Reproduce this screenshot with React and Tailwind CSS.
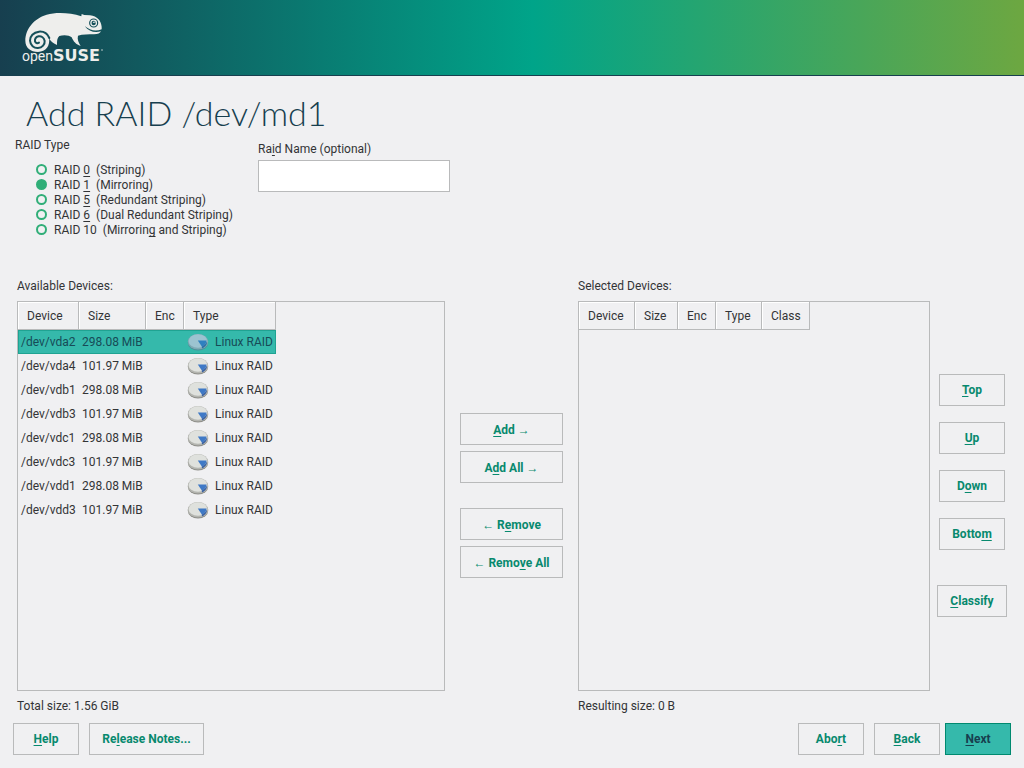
import { useState } from "react";

/* Renders a label in which the letter after "&" is underlined as its access key. */
function Mnemonic({ children }) {
  const at = children.indexOf("&");
  if (at < 0) return children;
  return (
    <>
      {children.slice(0, at)}
      <span className="underline decoration-1 underline-offset-2 [text-decoration-skip-ink:none]">
        {children[at + 1]}
      </span>
      {children.slice(at + 2)}
    </>
  );
}

function Button({ children, className = "", primary = false }) {
  const look = primary
    ? "border-[#00896f] bg-[#35b9ab] text-[#173f4f]"
    : "border-[#b9babb] bg-transparent text-[#07896e]";
  return (
    <button
      type="button"
      className={`h-8 border text-center font-bold whitespace-nowrap ${look} ${className}`}
    >
      <Mnemonic>{children}</Mnemonic>
    </button>
  );
}

function Logo() {
  return (
    <svg className="block h-[75px] w-28" viewBox="0 0 112 75" role="img" aria-label="openSUSE">
      <g transform="translate(20 8) scale(0.3333)" fill="none" strokeLinecap="round">
        <path
          fill="#eeeeec"
          d="M16 98 C16 60 46 30 80 20 C110 12 150 14 184 25 L185 18 L193 21 L210 22 C232 25 243 38 245 56 L245 64 C226 72 208 66 194 54 C206 70 224 76 243 70 C240 76 234 79 222 79 C206 80 188 78 174 83 C171 94 176 104 182 114 C168 110 160 100 155 88 C148 81 130 80 118 84 C111 90 111 100 111 111 C98 106 92 99 87 91 C91 112 78 132 54 132 C32 131 16 120 16 98 Z"
        />
        <path
          stroke="#16505a"
          strokeWidth="6"
          d="M88 90 C82 76 70 70 57 71 C40 73 30 85 30 98 C31 112 42 121 54 120 C67 119 75 109 74 99 C72 89 64 84 56 85 C48 87 44 93 45 100 C47 105 52 107 57 104"
        />
        <circle cx="221" cy="45" r="12" stroke="#16505a" strokeWidth="3.5" />
        <circle cx="221" cy="45" r="6.5" fill="#16505a" />
        <path stroke="#eeeeec" strokeWidth="3" d="M220 43 L226 42" />
      </g>
      <text x="22" y="61" fill="#eeeeec" fontFamily="Roboto, sans-serif" fontSize="14">open</text>
      <text x="53" y="61" fill="#eeeeec" fontFamily="'DejaVu Sans', sans-serif" fontWeight="700" fontSize="16">SUSE</text>
      <circle cx="102" cy="50" r="1" fill="#eeeeec" opacity="0.5" />
    </svg>
  );
}

function DiskIcon({ selected }) {
  const tone = selected
    ? { base: "#4d8f9a", side: "#7fa9b4", top: "#9cc3d0", slice: "#2f80c0", edge: "#2b6ea6" }
    : { base: "#8d8e88", side: "#b4b5b0", top: "#dfe1dd", slice: "#3f79c6", edge: "#3a62a3" };
  return (
    <svg className="block h-[18px] w-[22px]" viewBox="0 0 22 18" aria-hidden="true">
      <ellipse cx="11" cy="9.8" rx="10.2" ry="7.6" fill={tone.base} />
      <ellipse cx="11" cy="8.8" rx="10.2" ry="7.8" fill={tone.side} />
      <ellipse cx="11" cy="8" rx="9.4" ry="6.8" fill={tone.top} />
      <path d="M10.8 7.4 H19.6 C19.4 10.4 17.6 12.4 14.8 13.6 Z" fill={tone.slice} />
      <path d="M14.8 13.6 C17.6 12.4 19.4 10.4 19.6 8.6 L20 10 C19.6 12.6 17.4 14.6 15 15.4 Z" fill={tone.edge} />
    </svg>
  );
}

const raidTypes = [
  "RAID &0  (Striping)",
  "RAID &1  (Mirroring)",
  "RAID &5  (Redundant Striping)",
  "RAID &6  (Dual Redundant Striping)",
  "RAID 10  (Mirrorin&g and Striping)",
];

const devices = [
  ["/dev/vda2", "298.08 MiB"],
  ["/dev/vda4", "101.97 MiB"],
  ["/dev/vdb1", "298.08 MiB"],
  ["/dev/vdb3", "101.97 MiB"],
  ["/dev/vdc1", "298.08 MiB"],
  ["/dev/vdc3", "101.97 MiB"],
  ["/dev/vdd1", "298.08 MiB"],
  ["/dev/vdd3", "101.97 MiB"],
];

function HeadCell({ children, className }) {
  return (
    <th
      scope="col"
      className={`h-7 border-r border-b border-[#b9babb] pl-[9px] text-left font-normal shadow-[inset_1px_1px_0_#fff] ${className}`}
    >
      {children}
    </th>
  );
}

export default function App() {
  const [raid, setRaid] = useState(1);
  const [current, setCurrent] = useState(0);

  return (
    <div className="flex min-h-screen flex-col bg-[#f0f0f2] font-[Roboto,sans-serif] text-xs leading-4 text-[#333436]">
      <header className="h-[76px] border-b border-[#173f4f] bg-[linear-gradient(90deg,#173f4f_0%,#00a489_52%,#6da741_100%)]">
        <Logo />
      </header>

      <h1 className="pt-[19px] pb-px pl-[26px] font-[Lato,sans-serif] text-[34px] leading-9 font-light text-[#173f4f]">
        Add RAID /dev/md1
      </h1>

      <div className="flex pt-[5px] pl-[15px]">
        <fieldset className="w-[243px]">
          <legend>RAID Type</legend>
          <div className="flex flex-col pt-[9px] pl-[21px]">
            {raidTypes.map((label, i) => (
              <label key={label} className="flex h-[15px] items-center gap-[7px] leading-4 whitespace-pre">
                <input
                  type="radio"
                  name="raid-type"
                  checked={raid === i}
                  onChange={() => setRaid(i)}
                  className="size-[11px] appearance-none rounded-full border-2 border-[#30ae78] checked:bg-[#30ae78]"
                />
                <span>
                  <Mnemonic>{label}</Mnemonic>
                </span>
              </label>
            ))}
          </div>
        </fieldset>
        <div className="flex flex-col gap-[3px] pt-1">
          <label htmlFor="raid-name">
            <Mnemonic>Ra&id Name (optional)</Mnemonic>
          </label>
          <input id="raid-name" type="text" className="h-8 w-48 border border-[#b9babb] bg-white px-2" />
        </div>
      </div>

      <main className="grid flex-1 grid-cols-[428fr_133px_352fr_77px] grid-rows-[auto_1fr_auto] gap-y-[7px] px-[17px] pt-[41px]">
        <h2 className="col-start-1 row-start-1">Available Devices:</h2>
        <div className="col-start-1 row-start-2 border border-[#b9babb]">
          <table className="border-separate border-spacing-0">
            <thead>
              <tr>
                <HeadCell className="w-[61px]">Device</HeadCell>
                <HeadCell className="w-[67px]">Size</HeadCell>
                <HeadCell className="w-[38px]">Enc</HeadCell>
                <HeadCell className="w-[92px]">Type</HeadCell>
              </tr>
            </thead>
            <tbody>
              {devices.map(([name, size], i) => (
                <tr
                  key={name}
                  onClick={() => setCurrent(i)}
                  className={
                    i === current
                      ? "bg-[#35b9ab] text-[#174b57] outline-1 -outline-offset-1 outline-[#1fa392]"
                      : ""
                  }
                >
                  <td className="h-6 pl-[3px]">{name}</td>
                  <td className="pl-[3px]">{size}</td>
                  <td />
                  <td className="pl-[3px]">
                    <span className="flex items-center gap-[6px] whitespace-nowrap">
                      <DiskIcon selected={i === current} />
                      Linux RAID
                    </span>
                  </td>
                </tr>
              ))}
            </tbody>
          </table>
        </div>
        <p className="col-start-1 row-start-3">Total size: 1.56 GiB</p>

        <div className="col-start-2 row-start-2 flex flex-col justify-center gap-[6px] px-[15px] pb-px">
          <Button className="pt-0.5">&Add →</Button>
          <Button className="pt-0.5">A&dd All →</Button>
          <Button className="mt-[19px] pt-0.5">← R&emove</Button>
          <Button className="pt-0.5">← Remo&ve All</Button>
        </div>

        <h2 className="col-start-3 row-start-1">Selected Devices:</h2>
        <div className="col-start-3 row-start-2 border border-[#b9babb]">
          <table className="border-separate border-spacing-0">
            <thead>
              <tr>
                <HeadCell className="w-14">Device</HeadCell>
                <HeadCell className="w-[43px]">Size</HeadCell>
                <HeadCell className="w-[38px]">Enc</HeadCell>
                <HeadCell className="w-[46px]">Type</HeadCell>
                <HeadCell className="w-12">Class</HeadCell>
              </tr>
            </thead>
          </table>
        </div>
        <p className="col-start-3 row-start-3">Resulting size: 0 B</p>

        <div className="col-start-4 row-start-2 flex flex-col items-center justify-center gap-4 pb-px pl-[7px]">
          <Button className="w-[66px]">&Top</Button>
          <Button className="w-[66px]">&Up</Button>
          <Button className="w-[66px]">D&own</Button>
          <Button className="w-[66px]">Botto&m</Button>
          <Button className="mt-[19px] w-[70px]">&Classify</Button>
        </div>
      </main>

      <footer className="flex px-[13px] pt-[9px] pb-[13px]">
        <Button className="w-[66px]">&Help</Button>
        <Button className="ml-[10px] w-[115px]">Re&lease Notes...</Button>
        <Button className="ml-auto w-[66px]">Abo&rt</Button>
        <Button className="ml-[10px] w-[66px]">&Back</Button>
        <Button primary className="ml-[5px] w-[66px]">&Next</Button>
      </footer>
    </div>
  );
}
